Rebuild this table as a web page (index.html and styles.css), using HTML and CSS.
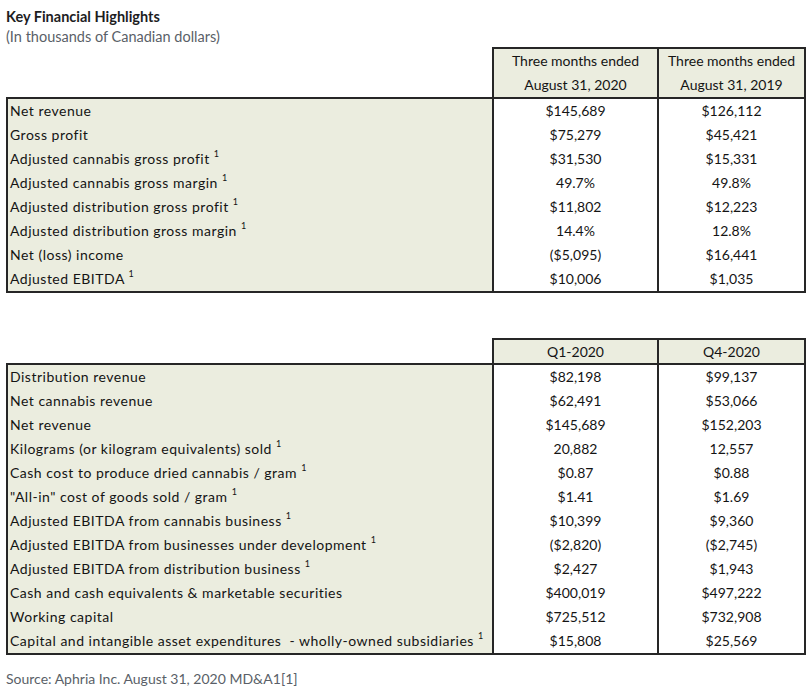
FILE: index.html
```html
<!DOCTYPE html>
<html>
<head>
<meta charset="utf-8">
<link rel="stylesheet" href="styles.css">
</head>
<body>
<div class="page">
  <div class="title">Key Financial Highlights</div>
  <div class="subtitle">(In thousands of Canadian dollars)</div>

  <table class="fin">
    <colgroup><col class="c-label"><col class="c-a"><col class="c-b"></colgroup>
    <thead>
      <tr>
        <th class="blank"></th>
        <th class="hd">Three months ended<br>August 31, 2020</th>
        <th class="hd">Three months ended<br>August 31, 2019</th>
      </tr>
    </thead>
    <tbody>
      <tr><td class="lbl">Net revenue</td><td>$145,689</td><td>$126,112</td></tr>
      <tr><td class="lbl">Gross profit</td><td>$75,279</td><td>$45,421</td></tr>
      <tr><td class="lbl">Adjusted cannabis gross profit <sup>1</sup></td><td>$31,530</td><td>$15,331</td></tr>
      <tr><td class="lbl">Adjusted cannabis gross margin <sup>1</sup></td><td>49.7%</td><td>49.8%</td></tr>
      <tr><td class="lbl">Adjusted distribution gross profit <sup>1</sup></td><td>$11,802</td><td>$12,223</td></tr>
      <tr><td class="lbl">Adjusted distribution gross margin <sup>1</sup></td><td>14.4%</td><td>12.8%</td></tr>
      <tr><td class="lbl">Net (loss) income</td><td>($5,095)</td><td>$16,441</td></tr>
      <tr><td class="lbl">Adjusted EBITDA <sup>1</sup></td><td>$10,006</td><td>$1,035</td></tr>
    </tbody>
  </table>

  <table class="fin second">
    <colgroup><col class="c-label"><col class="c-a"><col class="c-b"></colgroup>
    <thead>
      <tr>
        <th class="blank"></th>
        <th class="hd">Q1-2020</th>
        <th class="hd">Q4-2020</th>
      </tr>
    </thead>
    <tbody>
      <tr><td class="lbl">Distribution revenue</td><td>$82,198</td><td>$99,137</td></tr>
      <tr><td class="lbl">Net cannabis revenue</td><td>$62,491</td><td>$53,066</td></tr>
      <tr><td class="lbl">Net revenue</td><td>$145,689</td><td>$152,203</td></tr>
      <tr><td class="lbl">Kilograms (or kilogram equivalents) sold <sup>1</sup></td><td>20,882</td><td>12,557</td></tr>
      <tr><td class="lbl">Cash cost to produce dried cannabis / gram <sup>1</sup></td><td>$0.87</td><td>$0.88</td></tr>
      <tr><td class="lbl">"All-in" cost of goods sold / gram <sup>1</sup></td><td>$1.41</td><td>$1.69</td></tr>
      <tr><td class="lbl">Adjusted EBITDA from cannabis business <sup>1</sup></td><td>$10,399</td><td>$9,360</td></tr>
      <tr><td class="lbl">Adjusted EBITDA from businesses under development <sup>1</sup></td><td>($2,820)</td><td>($2,745)</td></tr>
      <tr><td class="lbl">Adjusted EBITDA from distribution business <sup>1</sup></td><td>$2,427</td><td>$1,943</td></tr>
      <tr><td class="lbl">Cash and cash equivalents &amp; marketable securities</td><td>$400,019</td><td>$497,222</td></tr>
      <tr><td class="lbl">Working capital</td><td>$725,512</td><td>$732,908</td></tr>
      <tr><td class="lbl">Capital and intangible asset expenditures &nbsp;- wholly-owned subsidiaries <sup>1</sup></td><td>$15,808</td><td>$25,569</td></tr>
    </tbody>
  </table>

  <div class="source">Source: Aphria Inc. August 31, 2020 MD&amp;A1[1]</div>
</div>
</body>
</html>
```

FILE: styles.css
```css
html, body {
  margin: 0;
  padding: 0;
  background: #ffffff;
}

.page {
  padding: 8px 0 0 6px;
  font-family: Lato, "Open Sans", sans-serif;
}

.title {
  font-size: 14.5px;
  font-weight: 700;
  color: #1d1d1f;
  line-height: 18px;
}

.subtitle {
  font-size: 14.5px;
  color: #5a5f68;
  line-height: 22px;
  margin-bottom: -1px;
}

.fin {
  border-collapse: collapse;
  width: 798px;
  table-layout: fixed;
  font-family: Lato, "Open Sans", sans-serif;
  font-size: 14px;
  color: #141414;
}

.fin .c-label { width: 486px; }
.fin .c-a { width: 165px; }
.fin .c-b { width: 147px; }

.fin th,
.fin td {
  padding: 0 2px;
  height: 24px;
  line-height: 24px;
  white-space: nowrap;
}

.fin th.blank {
  border: none;
  background: transparent;
  border-bottom: 2px solid #262626;
}

.fin th.hd {
  font-weight: 400;
  background: #ebeddf;
  border: 2px solid #262626;
  text-align: center;
  line-height: 24px;
}

.fin tbody td {
  text-align: center;
  border-left: 2px solid #262626;
  border-right: 2px solid #262626;
  background: #ffffff;
}

.fin tbody tr:last-child td {
  border-bottom: 2px solid #262626;
}

.fin tbody td.lbl {
  text-align: left;
  background: #ebeddf;
  padding-left: 2px;
  letter-spacing: 0.5px;
}

.fin sup {
  font-size: 9px;
  line-height: 0;
  vertical-align: 7px;
  letter-spacing: 0;
}

.second {
  margin-top: 45px;
}

.second th.hd {
  height: 22px;
  line-height: 22px;
}

.source {
  margin-top: 14px;
  font-size: 14px;
  color: #5a5f68;
  line-height: 20px;
}
```
